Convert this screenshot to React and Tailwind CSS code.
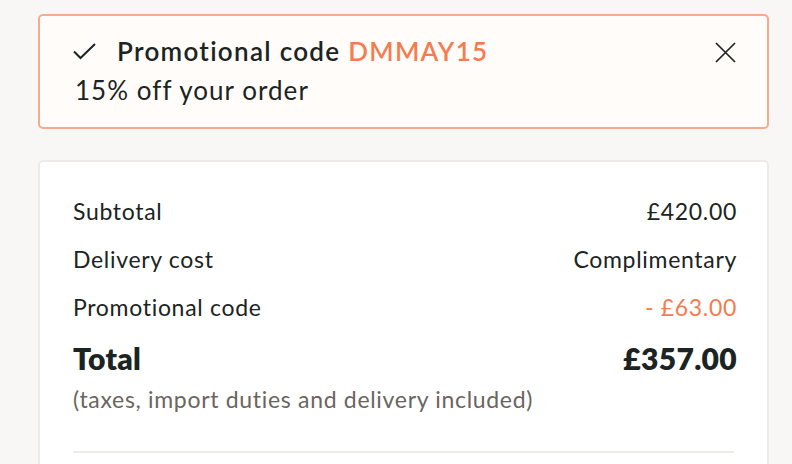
const rows = [
  { label: "Subtotal", value: "£420.00" },
  { label: "Delivery cost", value: "Complimentary" },
  { label: "Promotional code", value: "- £63.00", accent: true },
];

export default function App() {
  return (
    <div
      className="h-[464px] overflow-hidden bg-[#f8f7f6] pl-[38px] pr-[23px] pt-[14px] text-[#1c2423]"
      style={{ fontFamily: "Lato, 'Noto Sans', sans-serif" }}
    >
      {/* applied promo code */}
      <div className="flex items-start justify-between rounded-[5px] border-2 border-[#f6ab8e] bg-[#fffcfa] pl-[33px] pr-[31px] pt-[20px] pb-[22px]">
        <div>
          <div className="flex items-center gap-[21px] text-[26px] leading-[30px] tracking-[0.05em]">
            <svg width="23" height="17" viewBox="0 0 23 17" fill="none" stroke="currentColor" strokeWidth="2">
              <polyline points="1,8.5 7.5,15 22,1" />
            </svg>
            <span className="font-semibold">
              Promotional code <span className="text-[#f47c4f]">DMMAY15</span>
            </span>
          </div>
          <div className="mt-[9px] pl-[2px] text-[26px] leading-[30px] tracking-[0.04em]">15% off your order</div>
        </div>
        <button className="mt-[6px]">
          <svg width="21" height="21" viewBox="0 0 21 21" fill="none" stroke="currentColor" strokeWidth="1.7">
            <path d="M1 1 L20 20 M20 1 L1 20" />
          </svg>
        </button>
      </div>

      {/* summary */}
      <div className="mt-[31px] rounded-[5px] border-2 border-[#eeeae7] bg-white pl-[33px] pr-[30px] pt-[35px] pb-[40px]">
        <div className="flex flex-col gap-[20px]">
          {rows.map((r) => (
            <div key={r.label} className="flex justify-between text-[23px] leading-[28px] tracking-[0.03em]">
              <span>{r.label}</span>
              <span className={r.accent ? "text-[#f47c4f]" : ""}>{r.value}</span>
            </div>
          ))}
        </div>
        <div className="mt-[20px] flex justify-between text-[30px] font-extrabold leading-[34px] tracking-[0.01em]">
          <span>Total</span>
          <span>£357.00</span>
        </div>
        <div className="mt-[10px] text-[23px] leading-[28px] tracking-[0.03em] text-[#6b6560]">
          (taxes, import duties and delivery included)
        </div>
        <div className="mt-[38px] mr-[3px] h-[2px] bg-[#efebe8]" />
      </div>
    </div>
  );
}
